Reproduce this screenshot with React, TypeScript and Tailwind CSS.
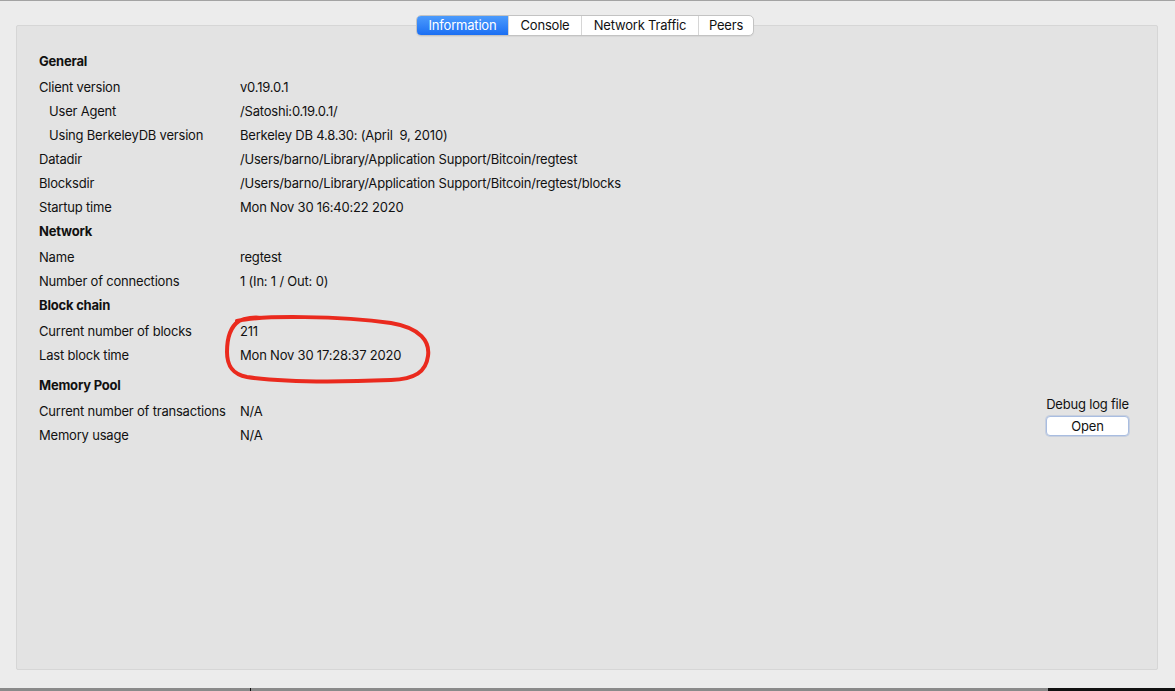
import React from 'react';

type Row = { label: string; value?: string; indent?: boolean };

const sections: { title: string; rows: Row[]; className?: string }[] = [
  {
    title: 'General',
    rows: [
      { label: 'Client version', value: 'v0.19.0.1' },
      { label: 'User Agent', value: '/Satoshi:0.19.0.1/', indent: true },
      { label: 'Using BerkeleyDB version', value: 'Berkeley DB 4.8.30: (April  9, 2010)', indent: true },
      { label: 'Datadir', value: '/Users/barno/Library/Application Support/Bitcoin/regtest' },
      { label: 'Blocksdir', value: '/Users/barno/Library/Application Support/Bitcoin/regtest/blocks' },
      { label: 'Startup time', value: 'Mon Nov 30 16:40:22 2020' },
    ],
  },
  {
    title: 'Network',
    rows: [
      { label: 'Name', value: 'regtest' },
      { label: 'Number of connections', value: '1 (In: 1 / Out: 0)' },
    ],
  },
  {
    title: 'Block chain',
    rows: [
      { label: 'Current number of blocks', value: '211' },
      { label: 'Last block time', value: 'Mon Nov 30 17:28:37 2020' },
    ],
  },
  {
    title: 'Memory Pool',
    className: 'mt-[6px]',
    rows: [
      { label: 'Current number of transactions', value: 'N/A' },
      { label: 'Memory usage', value: 'N/A' },
    ],
  },
];

const tabs = ['Information', 'Console', 'Network Traffic', 'Peers'];
const tabWidths = ['w-[91px]', 'w-[73px]', 'w-[117px]', 'w-[55px]'];

const App: React.FC = () => {
  return (
    <div
      className="relative w-[1175px] h-[691px] bg-[#ececec] border-t border-[#a3a3a3] flex flex-col overflow-hidden text-[13px] tracking-[-0.2px] text-[#111]"
      style={{ fontFamily: "Inter, 'Helvetica Neue', Arial, sans-serif" }}
    >
      {/* Tab bar */}
      <div className="relative z-10 flex justify-center pr-[5px] mt-[14px]">
        <div className="flex h-[21px] rounded-[5px] border border-[#c3c3c3] bg-white overflow-hidden shadow-[0_1px_1px_rgba(0,0,0,0.06)]">
          {tabs.map((t, i) => (
            <div
              key={t}
              className={
                i === 0
                  ? `${tabWidths[i]} flex items-center justify-center text-white bg-gradient-to-b from-[#4c9bfc] to-[#1a6ef3]`
                  : `${tabWidths[i]} flex items-center justify-center text-[#111] border-l border-[#d6d6d6]`
              }
            >
              {t}
            </div>
          ))}
        </div>
      </div>

      {/* Panel */}
      <div className="relative ml-[16px] mr-[17px] -mt-[11px] h-[645px] bg-[#e3e3e3] border border-[#d6d6d6] rounded-[2px] pl-[22px] pr-[28px] pt-[24px] flex">
        <div className="flex-1 flex flex-col">
          {sections.map((s) => (
            <div key={s.title} className={s.className}>
              <div className="h-[24px] flex items-center font-bold mb-[2px]">{s.title}</div>
              {s.rows.map((r) => (
                <div key={r.label} className="h-[24px] flex items-center">
                  <div className={r.indent ? 'w-[201px] pl-[10px]' : 'w-[201px]'}>{r.label}</div>
                  <div className="whitespace-pre">{r.value}</div>
                </div>
              ))}
            </div>
          ))}
        </div>

        <div className="flex flex-col items-center mt-[346px] self-start">
          <div className="h-[16px] leading-[16px]">Debug log file</div>
          <button className="mt-[4px] w-[83px] h-[20px] rounded-[4px] bg-white border border-[#a9bde0] shadow-[0_0_0_1px_rgba(120,150,210,0.25)] text-[13px] leading-none text-[#111]">
            Open
          </button>
        </div>

        {/* red hand-drawn annotation */}
        <svg
          className="absolute left-[204px] top-[286px] pointer-events-none"
          width="220"
          height="80"
          viewBox="0 0 220 80"
        >
          <path
            d="M 16 9 C 40 3, 120 4, 170 11 C 200 16, 209 30, 207 44 C 205 60, 194 67, 170 68 C 120 70, 60 70, 26 65 C 10 62, 6 52, 6 40 C 6 26, 9 15, 18 9 C 24 6, 34 5, 40 6"
            fill="none"
            stroke="#ea2a1e"
            strokeWidth="4"
            strokeLinecap="round"
          />
        </svg>
      </div>

      {/* bottom dock edge */}
      <div className="mt-auto h-[3px] flex">
        <div className="w-[250px] bg-[#8a8a8a]" />
        <div className="w-[1px] bg-[#111]" />
        <div className="w-[797px] bg-[#8a8a8a]" />
        <div className="flex-1 bg-[#111]" />
      </div>
    </div>
  );
};

export default App;
